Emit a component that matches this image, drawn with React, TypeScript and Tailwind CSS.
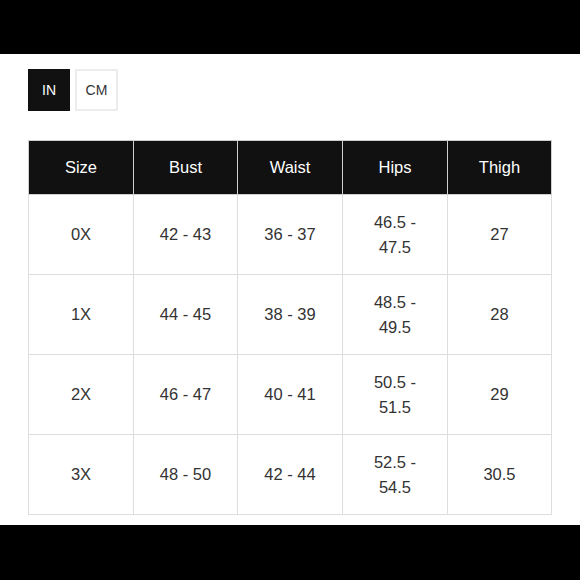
const headers = ['Size', 'Bust', 'Waist', 'Hips', 'Thigh']

const rows = [
  ['0X', '42 - 43', '36 - 37', '46.5 - 47.5', '27'],
  ['1X', '44 - 45', '38 - 39', '48.5 - 49.5', '28'],
  ['2X', '46 - 47', '40 - 41', '50.5 - 51.5', '29'],
  ['3X', '48 - 50', '42 - 44', '52.5 - 54.5', '30.5'],
]

const widths = ['w-[105px]', 'w-[104px]', 'w-[105px]', 'w-[105px]', 'w-[104px]']

export default function App() {
  return (
    <div className="w-[580px] h-[580px] flex flex-col bg-black font-['Liberation_Sans',Arial,sans-serif]">
      <div className="h-[54px] shrink-0 bg-black" />

      <div className="h-[471px] shrink-0 bg-white px-[28px] pt-[15px]">
        <div className="flex gap-[5px]">
          <button
            type="button"
            className="w-[42px] h-[42px] bg-[#111] text-white text-[14px]"
          >
            IN
          </button>
          <button
            type="button"
            className="w-[43px] h-[42px] border-2 border-[#ececec] text-[#333] text-[14px]"
          >
            CM
          </button>
        </div>

        <table className="mt-[29px] w-[523px] table-fixed border-collapse text-[16.5px] text-[#333]">
          <colgroup>
            {widths.map((w, i) => (
              <col key={i} className={w} />
            ))}
          </colgroup>
          <thead>
            <tr className="h-[54px] bg-[#111]">
              {headers.map((h) => (
                <th
                  key={h}
                  className="border border-[#cfcfcf] font-normal text-white text-center"
                >
                  {h}
                </th>
              ))}
            </tr>
          </thead>
          <tbody>
            {rows.map((row) => (
              <tr key={row[0]} className="h-[80px]">
                {row.map((cell, i) => (
                  <td
                    key={i}
                    className="border border-[#dedede] px-[15px] text-center leading-[25px]"
                  >
                    {cell}
                  </td>
                ))}
              </tr>
            ))}
          </tbody>
        </table>
      </div>

      <div className="flex-1 bg-black" />
    </div>
  )
}
